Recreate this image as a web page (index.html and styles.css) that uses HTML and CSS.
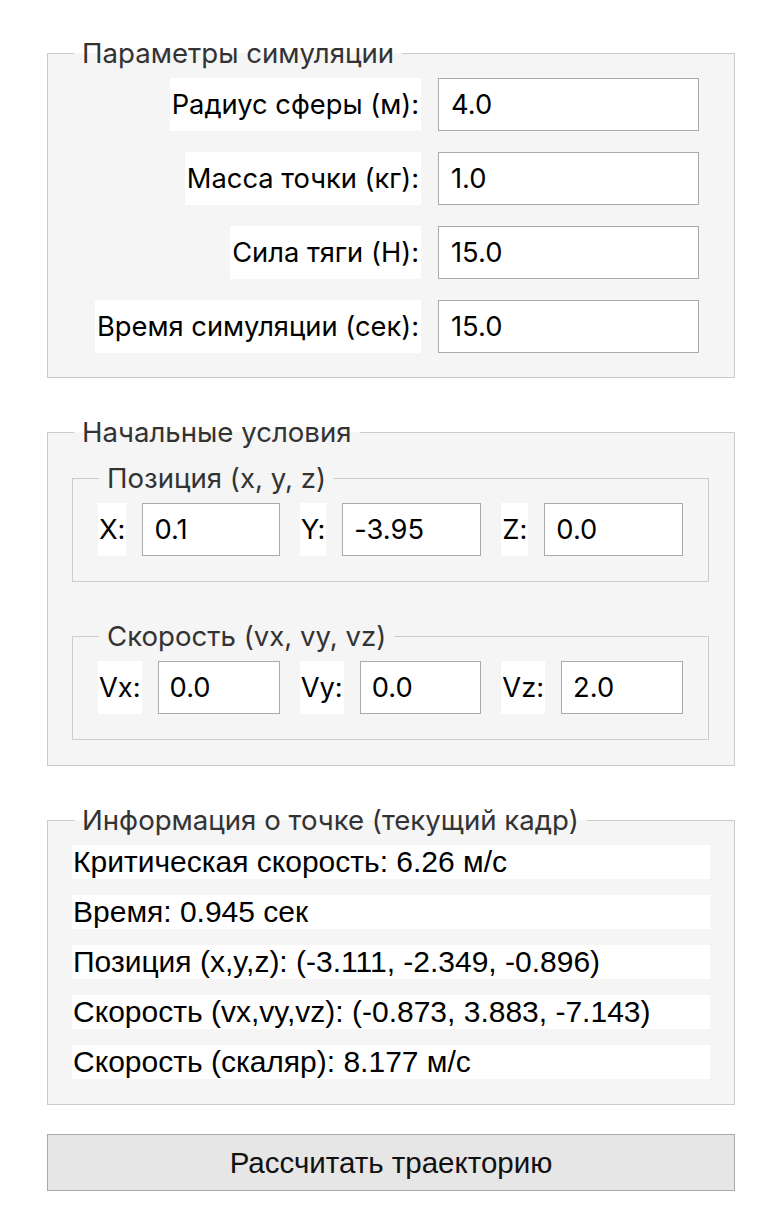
FILE: index.html
```html
<!DOCTYPE html>
<html lang="ru">
<head>
<meta charset="utf-8">
<title>Симуляция</title>
<link rel="stylesheet" href="styles.css">
</head>
<body>
<main class="panel">
  <fieldset class="group group-params">
    <legend class="legend">Параметры симуляции</legend>
    <div class="body param-grid">
      <span class="lbl">Радиус сферы (м):</span><input class="entry" value="4.0">
      <span class="lbl">Масса точки (кг):</span><input class="entry" value="1.0">
      <span class="lbl">Сила тяги (Н):</span><input class="entry" value="15.0">
      <span class="lbl">Время симуляции (сек):</span><input class="entry" value="15.0">
    </div>
  </fieldset>

  <fieldset class="group group-init">
    <legend class="legend">Начальные условия</legend>
    <div class="body init-body">
      <fieldset class="group sub">
        <legend class="legend">Позиция (x, y, z)</legend>
        <div class="body vec-row">
          <div class="field"><span class="lbl">X:</span><input class="entry" value="0.1"></div>
          <div class="field"><span class="lbl">Y:</span><input class="entry" value="-3.95"></div>
          <div class="field"><span class="lbl">Z:</span><input class="entry" value="0.0"></div>
        </div>
      </fieldset>
      <fieldset class="group sub">
        <legend class="legend">Скорость (vx, vy, vz)</legend>
        <div class="body vec-row">
          <div class="field"><span class="lbl">Vx:</span><input class="entry" value="0.0"></div>
          <div class="field"><span class="lbl">Vy:</span><input class="entry" value="0.0"></div>
          <div class="field"><span class="lbl">Vz:</span><input class="entry" value="2.0"></div>
        </div>
      </fieldset>
    </div>
  </fieldset>

  <fieldset class="group group-info">
    <legend class="legend">Информация о точке (текущий кадр)</legend>
    <div class="body info-list">
      <div class="info">Критическая скорость: 6.26 м/с</div>
      <div class="info">Время: 0.945 сек</div>
      <div class="info">Позиция (x,y,z): (-3.111, -2.349, -0.896)</div>
      <div class="info">Скорость (vx,vy,vz): (-0.873, 3.883, -7.143)</div>
      <div class="info">Скорость (скаляр): 8.177 м/с</div>
    </div>
  </fieldset>

  <button class="calc" type="button">Рассчитать траекторию</button>
</main>
</body>
</html>
```

FILE: styles.css
```css
html, body {
  margin: 0;
  padding: 0;
  background: #ffffff;
}
body {
  font-family: Inter, "Noto Sans", sans-serif;
  font-size: 27.3px;
  font-feature-settings: "calt" 0, "case" 0;
  color: #000;
}
.panel {
  width: 688px;
  margin-left: 47px;
  padding-top: 36px;
  display: flex;
  flex-direction: column;
}
.group {
  margin: 0;
  border: 1px solid #cbcbcb;
  background: #f5f5f5;
  padding: 0;
  min-width: 0;
}
.legend {
  margin-left: 26px;
  padding: 0 8px;
  line-height: 34px;
  font-size: 27.6px;
  color: #333333;
}
.param-grid {
  display: grid;
  grid-template-columns: 1fr 261px;
  column-gap: 17px;
  row-gap: 21px;
  padding: 8px 35px 24px 0;
}
.lbl {
  justify-self: end;
  background: #ffffff;
  line-height: 53px;
  height: 53px;
  padding: 0 2px;
  white-space: nowrap;
}
.entry {
  box-sizing: border-box;
  height: 53px;
  border: 1px solid #aaaaaa;
  background: #ffffff;
  font: inherit;
  font-feature-settings: "calt" 0, "case" 0;
  color: #000;
  padding: 0 12px;
  outline: none;
  min-width: 0;
  width: 100%;
}
.group-init {
  margin-top: 37px;
}
.init-body {
  padding: 12px 25px 25px 24px;
  display: flex;
  flex-direction: column;
  gap: 37px;
}
.vec-row {
  display: grid;
  grid-template-columns: repeat(3, minmax(0, 1fr));
  column-gap: 20px;
  padding: 8px 25px 25px 25px;
}
.field {
  display: flex;
  align-items: center;
  gap: 16px;
  min-width: 0;
}
.field .lbl {
  flex: none;
  padding: 0 1px;
}
.field .entry {
  flex: 1 1 0;
  width: 0;
  min-width: 0;
  padding: 0 11px;
}
.group-info {
  margin-top: 37px;
}
.info-list {
  display: flex;
  flex-direction: column;
  gap: 16px;
  padding: 8px 24px 25px 24px;
}
.info {
  background: #ffffff;
  line-height: 34px;
  height: 34px;
  padding-left: 1px;
  font-family: "Liberation Sans", Arial, sans-serif;
  font-size: 30px;
  white-space: nowrap;
}
.calc {
  margin-top: 29px;
  height: 57px;
  border: 1px solid #a9a9a9;
  background: #e6e6e6;
  font-family: "Liberation Sans", Arial, sans-serif;
  font-size: 29.5px;
  color: #111;
  padding: 0;
}
```
